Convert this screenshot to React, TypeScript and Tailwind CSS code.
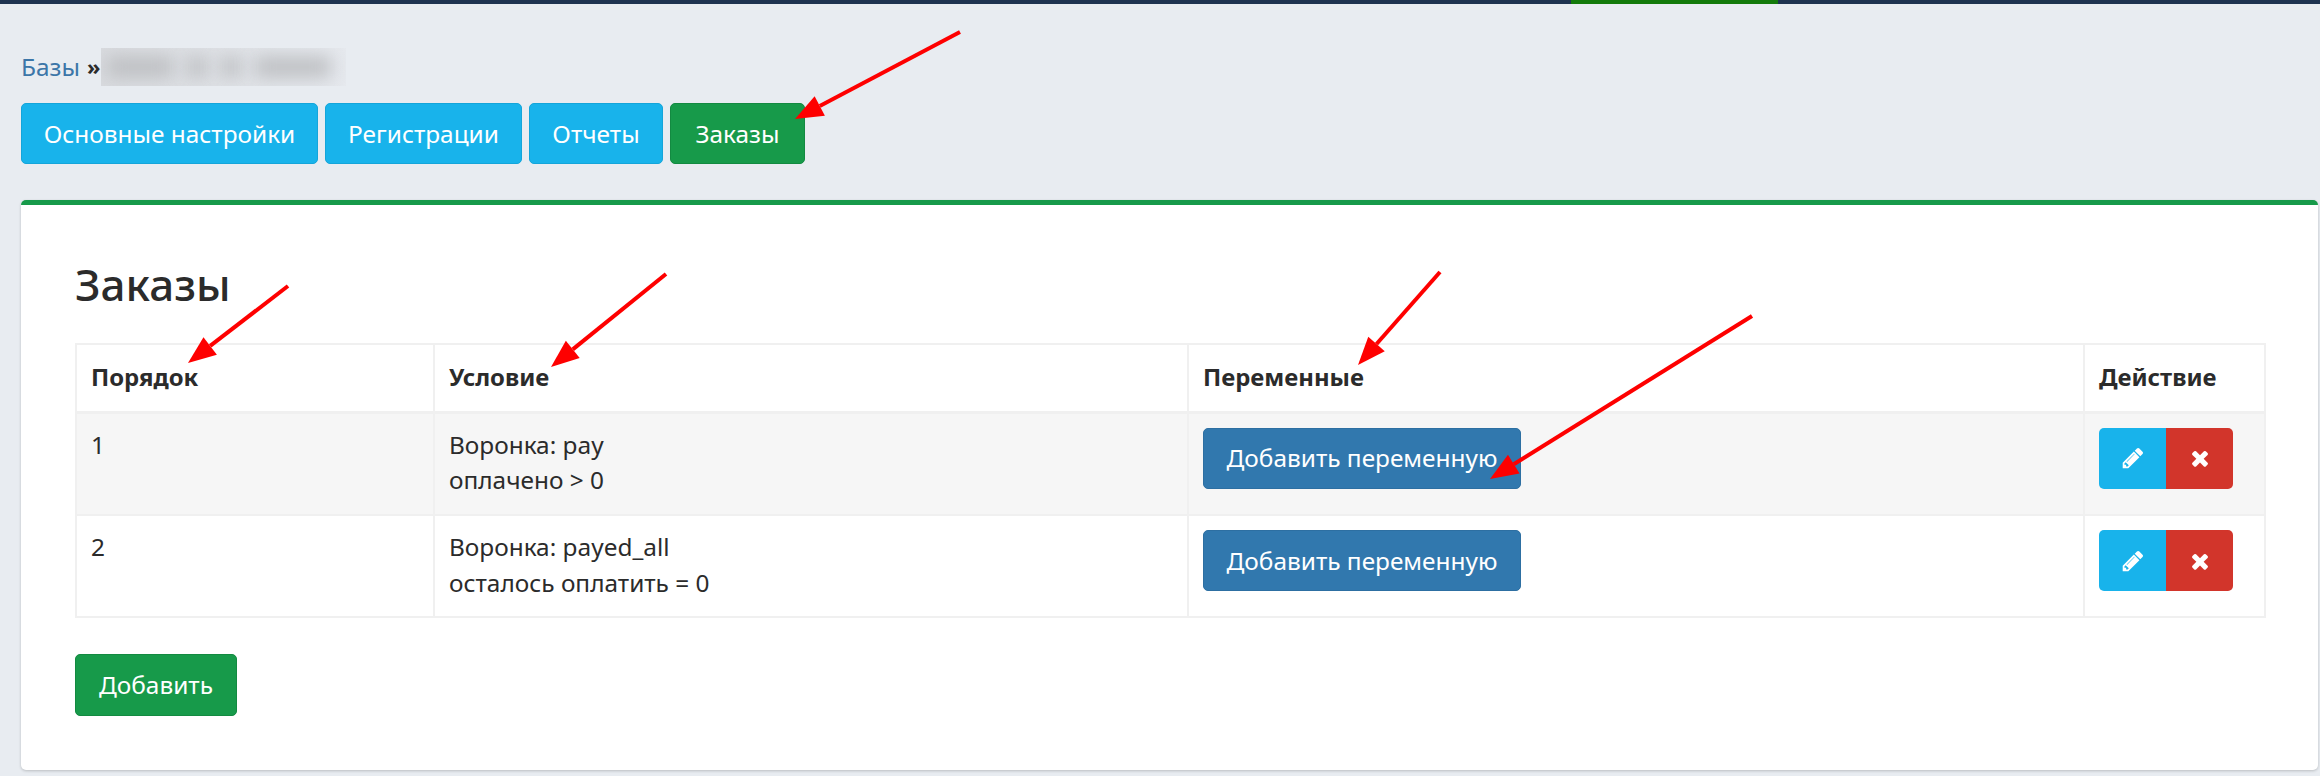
const font = { fontFamily: '"Noto Sans", sans-serif' };

function Arrow({ x1, y1, x2, y2 }: { x1: number; y1: number; x2: number; y2: number }) {
  const a = Math.atan2(y2 - y1, x2 - x1);
  const len = 28;
  const w = 11;
  const bx = x2 - Math.cos(a) * len;
  const by = y2 - Math.sin(a) * len;
  const nx = -Math.sin(a) * w;
  const ny = Math.cos(a) * w;
  return (
    <g>
      <line x1={x1} y1={y1} x2={bx} y2={by} stroke="#fe0000" strokeWidth={4} />
      <polygon points={`${x2},${y2} ${bx + nx},${by + ny} ${bx - nx},${by - ny}`} fill="#fe0000" />
    </g>
  );
}

function PencilIcon() {
  return (
    <svg viewBox="0 0 1792 1792" className="w-[24px] h-[24px]" fill="#fff" aria-hidden="true">
      <path d="M491 1536l91-91-235-235-91 91v107h128v128h107zm523-928q0-22-22-22-10 0-17 7l-542 542q-7 7-7 17 0 22 22 22 10 0 17-7l542-542q7-7 7-17zm-54-192l416 416-832 832h-416v-416zm683 96q0 53-37 90l-166 166-416-416 166-165q36-38 90-38 53 0 91 38l235 234q37 39 37 91z" />
    </svg>
  );
}

function CloseIcon() {
  return (
    <svg viewBox="0 0 1792 1792" className="w-[24px] h-[24px]" fill="#fff" aria-hidden="true">
      <path d="M1490 1322q0 40-28 68l-136 136q-28 28-68 28t-68-28l-294-294-294 294q-28 28-68 28t-68-28l-136-136q-28-28-28-68t28-68l294-294-294-294q-28-28-28-68t28-68l136-136q28-28 68-28t68 28l294 294 294-294q28-28 68-28t68 28l136 136q28 28 28 68t-28 68l-294 294 294 294q28 28 28 68z" />
    </svg>
  );
}

const rows = [
  { n: "1", a: "Воронка: pay", b: "оплачено > 0", cls: "h-[103px] bg-[#f6f6f6]" },
  { n: "2", a: "Воронка: payed_all", b: "осталось оплатить = 0", cls: "h-[102px] bg-white" },
];

const tabs = [
  { label: "Основные настройки", cls: "w-[297px] bg-[#18b3eb] border-[#14a5da]" },
  { label: "Регистрации", cls: "w-[197px] bg-[#18b3eb] border-[#14a5da]" },
  { label: "Отчеты", cls: "w-[134px] bg-[#18b3eb] border-[#14a5da]" },
  { label: "Заказы", cls: "w-[135px] bg-[#179a4a] border-[#138a41]" },
];

const smudges = ["w-[66px]", "w-[20px]", "w-[20px]", "w-[76px]"];

export default function App() {
  return (
    <div className="relative h-[776px] overflow-hidden bg-[#e8ecf1] text-[24.4px] leading-[35.7px] text-[#2b2b2b]" style={font}>
      <div className="flex h-[4px] bg-[#1e3350]">
        <div className="ml-[1571px] w-[207px] bg-[#137a0b]" />
      </div>

      <div className="pl-[21px] pr-[2px]">
        <div className="mt-[45px] flex h-[35px] items-center">
          <a className="text-[#3c76a8]">Базы</a>
          <span className="ml-[7px] text-[22px] font-bold">»</span>
          <div className="ml-[1px] flex h-[38px] w-[245px] items-center gap-[14px] overflow-hidden bg-gradient-to-r from-[#d9dbdf] to-[#e6e9ee] pl-[6px]">
            {smudges.map((w, i) => (
              <div key={i} className={`h-[20px] ${w} bg-[#bcbec1] blur-[9px]`} />
            ))}
          </div>
        </div>

        <div className="mt-[19px] flex gap-[7px]">
          {tabs.map((t) => (
            <button key={t.label} className={`h-[61px] rounded-[5px] border text-white ${t.cls}`}>
              {t.label}
            </button>
          ))}
        </div>

        <div className="mt-[36px] h-[570px] rounded-[5px] border-t-[5px] border-[#179a4a] bg-white px-[54px] shadow-[0_1px_3px_rgba(0,0,0,0.2)]">
          <h1 className="h-[138px] pt-[51px] text-[44px] font-medium leading-[56px]">Заказы</h1>

          <table className="w-[2189px] table-fixed border-collapse">
            <colgroup>
              <col className="w-[358px]" />
              <col className="w-[754px]" />
              <col className="w-[896px]" />
              <col className="w-[181px]" />
            </colgroup>
            <thead>
              <tr className="h-[68px]">
                {["Порядок", "Условие", "Переменные", "Действие"].map((h) => (
                  <th key={h} className="border-2 border-b-[3px] border-[#f0f0f0] px-[14px] pb-[2px] text-left text-[23.9px] font-bold">
                    {h}
                  </th>
                ))}
              </tr>
            </thead>
            <tbody>
              {rows.map((r) => (
                <tr key={r.n} className={r.cls}>
                  <td className="border-2 border-[#f0f0f0] px-[14px] pt-[13px] align-top">{r.n}</td>
                  <td className="border-2 border-[#f0f0f0] px-[14px] pt-[13px] align-top">
                    <div>{r.a}</div>
                    <div>{r.b}</div>
                  </td>
                  <td className="border-2 border-[#f0f0f0] px-[14px] pt-[14px] align-top">
                    <button className="h-[61px] w-[318px] rounded-[5px] border border-[#2d6fa2] bg-[#3178ae] text-white">
                      Добавить переменную
                    </button>
                  </td>
                  <td className="border-2 border-[#f0f0f0] px-[14px] pt-[14px] align-top">
                    <div className="flex h-[61px] w-[134px]">
                      <button className="flex flex-1 items-center justify-center rounded-l-[5px] bg-[#18b3eb]">
                        <PencilIcon />
                      </button>
                      <button className="flex flex-1 items-center justify-center rounded-r-[5px] bg-[#d2352b]">
                        <CloseIcon />
                      </button>
                    </div>
                  </td>
                </tr>
              ))}
            </tbody>
          </table>

          <button className="mt-[36px] h-[62px] w-[162px] rounded-[5px] border border-[#138a41] bg-[#179a4a] text-white">
            Добавить
          </button>
        </div>
      </div>

      <svg className="pointer-events-none absolute left-0 top-0" width="2320" height="776" aria-hidden="true">
        <Arrow x1={960} y1={32} x2={795} y2={119} />
        <Arrow x1={288} y1={286} x2={188} y2={363} />
        <Arrow x1={666} y1={274} x2={551} y2={367} />
        <Arrow x1={1440} y1={272} x2={1358} y2={365} />
        <Arrow x1={1752} y1={316} x2={1490} y2={479} />
      </svg>
    </div>
  );
}
